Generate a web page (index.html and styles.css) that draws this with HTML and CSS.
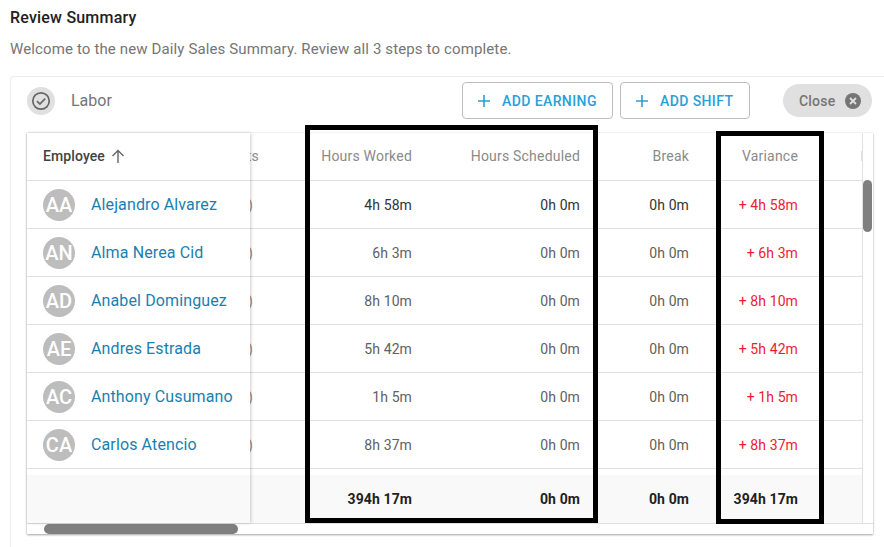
FILE: index.html
```html
<!DOCTYPE html>
<html lang="en">
<head>
<meta charset="utf-8">
<title>Review Summary</title>
<link rel="stylesheet" href="styles.css">
</head>
<body>
<h1 class="title">Review Summary</h1>
<p class="subtitle">Welcome to the new Daily Sales Summary. Review all 3 steps to complete.</p>
<section class="card">
  <header class="card-head">
    <span class="status"><svg width="20" height="20" viewBox="0 0 20 20" fill="none" stroke="#666" stroke-width="1.7"><circle cx="10" cy="10" r="8.2"/><path d="M6 10.2l2.9 2.9L14.2 7.6"/></svg></span>
    <span class="section-name">Labor</span>
    <button class="btn earning"><svg width="12" height="12" viewBox="0 0 12 12" stroke="#2a9fd8" stroke-width="1.6"><path d="M6 0v12M0 6h12"/></svg>ADD EARNING</button>
    <button class="btn shift"><svg width="12" height="12" viewBox="0 0 12 12" stroke="#2a9fd8" stroke-width="1.6"><path d="M6 0v12M0 6h12"/></svg>ADD SHIFT</button>
    <button class="close">Close<svg width="16" height="16" viewBox="0 0 16 16"><circle cx="8" cy="8" r="8" fill="#757575"/><path d="M5 5l6 6M11 5l-6 6" stroke="#e0e0e0" stroke-width="1.8"/></svg></button>
  </header>
  <div class="table">
    <div class="table-main">
      <div class="fixed">
        <div class="row head"><span class="emp-label">Employee</span><svg class="sort" width="14" height="14" viewBox="0 0 14 14" fill="none" stroke="#666" stroke-width="1.4"><path d="M7 14V1.5M1.5 7L7 1.5 12.5 7"/></svg></div>
        <div class="row"><span class="avatar">AA</span><a class="name">Alejandro Alvarez</a></div>
        <div class="row"><span class="avatar">AN</span><a class="name">Alma Nerea Cid</a></div>
        <div class="row"><span class="avatar">AD</span><a class="name">Anabel Dominguez</a></div>
        <div class="row"><span class="avatar">AE</span><a class="name">Andres Estrada</a></div>
        <div class="row"><span class="avatar">AC</span><a class="name">Anthony Cusumano</a></div>
        <div class="row"><span class="avatar">CA</span><a class="name">Carlos Atencio</a></div>
        <div class="row foot"></div>
      </div>
      <div class="scroller">
        <div class="row cols head"><span class="cell clip">Shifts</span><span class="cell">Hours Worked</span><span class="cell">Hours Scheduled</span><span class="cell">Break</span><span class="cell">Variance</span><span class="cell"><i class="tick"></i></span></div>
        <div class="row cols first"><span class="cell clip pad">(0)</span><span class="cell">4h 58m</span><span class="cell">0h 0m</span><span class="cell">0h 0m</span><span class="cell var">+ 4h 58m</span><span class="cell"></span></div>
        <div class="row cols"><span class="cell clip pad">(0)</span><span class="cell">6h 3m</span><span class="cell">0h 0m</span><span class="cell">0h 0m</span><span class="cell var">+ 6h 3m</span><span class="cell"></span></div>
        <div class="row cols"><span class="cell clip pad">(0)</span><span class="cell">8h 10m</span><span class="cell">0h 0m</span><span class="cell">0h 0m</span><span class="cell var">+ 8h 10m</span><span class="cell"></span></div>
        <div class="row cols"><span class="cell clip pad">(0)</span><span class="cell">5h 42m</span><span class="cell">0h 0m</span><span class="cell">0h 0m</span><span class="cell var">+ 5h 42m</span><span class="cell"></span></div>
        <div class="row cols"><span class="cell clip pad">(0)</span><span class="cell">1h 5m</span><span class="cell">0h 0m</span><span class="cell">0h 0m</span><span class="cell var">+ 1h 5m</span><span class="cell"></span></div>
        <div class="row cols"><span class="cell clip pad">(0)</span><span class="cell">8h 37m</span><span class="cell">0h 0m</span><span class="cell">0h 0m</span><span class="cell var">+ 8h 37m</span><span class="cell"></span></div>
        <div class="row cols foot"><span class="cell"></span><span class="cell">394h 17m</span><span class="cell">0h 0m</span><span class="cell">0h 0m</span><span class="cell">394h 17m</span><span class="cell"></span></div>
      </div>
      <div class="vscroll"><span class="vthumb"></span></div>
    </div>
    <div class="hscroll"><span class="hthumb"></span></div>
  </div>
</section>
<div class="mark mark-a"></div>
<div class="mark mark-b"></div>
</body>
</html>
```

FILE: styles.css
```css
* { box-sizing: border-box; }
html, body { margin: 0; height: 100%; }
body {
  position: relative;
  overflow: hidden;
  background: #fff;
  font-family: Roboto, "Liberation Sans", sans-serif;
  font-size: 14px;
  padding-top: 8px;
}
.title {
  margin: 0 0 0 10px;
  font-size: 16px;
  line-height: 19px;
  font-weight: 500;
  letter-spacing: .2px;
  color: #212121;
}
.subtitle {
  margin: 12px 0 0 10px;
  font-size: 15px;
  line-height: 20px;
  letter-spacing: .13px;
  color: #757575;
}
.card {
  margin: 17px 0 0 10px;
  height: 480px;
  border: 1px solid #ececec;
  border-right: 0;
  border-radius: 4px 0 0 0;
}
.card-head {
  display: flex;
  align-items: center;
  height: 56px;
  padding: 0 12px 9px 16px;
}
.status {
  display: flex;
  align-items: center;
  justify-content: center;
  width: 28px;
  height: 28px;
  border-radius: 50%;
  background: #e0e0e0;
}
.section-name {
  margin-left: 16px;
  margin-right: auto;
  font-size: 16px;
  color: #757575;
}
.btn {
  display: flex;
  align-items: center;
  gap: 12px;
  height: 37px;
  padding: 0 15px;
  border: 1px solid #bdbdbd;
  border-radius: 4px;
  background: #fff;
  font: 500 14px Roboto, sans-serif;
  letter-spacing: .4px;
  color: #2a9fd8;
}
.earning { width: 151px; }
.shift { width: 130px; margin-left: 7px; }
.close {
  display: flex;
  align-items: center;
  gap: 10px;
  width: 89px;
  height: 33px;
  margin-left: 33px;
  padding: 0 10px 0 16px;
  border: 0;
  border-radius: 17px;
  background: #e0e0e0;
  font: 500 14px Roboto, sans-serif;
  letter-spacing: .2px;
  color: #757575;
}
.table {
  margin-left: 16px;
  width: 846px;
  box-shadow: 0 1px 2px rgba(0,0,0,.35), 0 0 2px rgba(0,0,0,.08);
}
.table-main { display: flex; height: 390px; }
.fixed {
  position: relative;
  z-index: 1;
  flex: 0 0 223px;
  box-shadow: 1px 0 3px rgba(0,0,0,.2);
}
.row {
  display: flex;
  align-items: center;
  height: 48px;
  border-bottom: 1px solid #e0e0e0;
  background: #fff;
}
.fixed .row { padding-left: 16px; }
.row.head { padding-bottom: 1px; }
.fixed .row.foot, .row.foot {
  height: 48px;
  margin-top: 6px;
  border-bottom: 0;
  background: #f9f9f9;
}
.emp-label {
  font-weight: 500;
  letter-spacing: .1px;
  color: #424242;
}
.sort { margin-left: 6px; }
.avatar {
  display: flex;
  align-items: center;
  justify-content: center;
  flex: 0 0 32px;
  height: 32px;
  border-radius: 50%;
  background: #bdbdbd;
  color: #fff;
  font-size: 20px;
  font-weight: 500;
}
.name {
  margin-left: 16px;
  font-size: 16px;
  letter-spacing: .12px;
  color: #1a7fb0;
}
.scroller { flex: 1 1 auto; min-width: 0; overflow: hidden; }
.cols {
  display: grid;
  grid-template-columns: 9px 153px 168px 109px 109px 64px;
  font-size: 14px;
  letter-spacing: .1px;
  color: #616161;
}
.cols.first { color: #333; }
.cols.head { color: #8a8a8a; letter-spacing: .2px; }
.cols.foot { font-weight: 700; color: #212121; }
.cell {
  display: flex;
  justify-content: flex-end;
  white-space: nowrap;
}
.clip.pad { padding-right: 6px; }
.clip { color: #8a8a8a; }
.var { color: #f01a2e; }
.tick { width: 1px; height: 10px; background: #e0e0e0; }
.vscroll {
  flex: 0 0 11px;
  padding: 47px 1px 0 0;
  border-left: 1px solid #e0e0e0;
}
.vthumb {
  display: block;
  height: 52px;
  border-radius: 5px;
  background: #7f7f7f;
}
.hscroll {
  height: 11px;
  padding-left: 17px;
  border-top: 1px solid #e0e0e0;
}
.hthumb {
  display: block;
  width: 194px;
  height: 10px;
  border-radius: 5px;
  background: #7f7f7f;
}
.mark {
  position: absolute;
  border: 5px solid #000;
  pointer-events: none;
  z-index: 2;
}
.mark-a { left: 305px; top: 125px; width: 293px; height: 398px; }
.mark-b { left: 716px; top: 131px; width: 108px; height: 393px; }
```
